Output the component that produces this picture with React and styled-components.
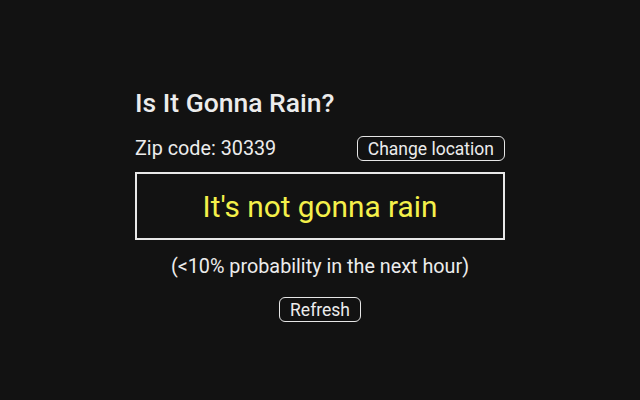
import React from 'react';
import styled, { createGlobalStyle } from 'styled-components';

const GlobalStyle = createGlobalStyle`
  html, body {
    margin: 0;
    padding: 0;
    background: #121212;
  }
  body {
    font-family: Roboto, "Noto Sans", sans-serif;
    color: #ececec;
  }
`;

const Page = styled.div`
  width: 640px;
  height: 400px;
  display: flex;
  justify-content: center;
  padding-top: 83px;
  box-sizing: border-box;
`;

const Card = styled.div`
  width: 370px;
  display: flex;
  flex-direction: column;
`;

const Title = styled.h1`
  margin: 0;
  font-size: 26.5px;
  font-weight: 500;
  line-height: 40px;
`;

const ZipRow = styled.div`
  display: flex;
  justify-content: space-between;
  align-items: center;
  margin-top: 13px;
`;

const ZipText = styled.span`
  font-size: 19.8px;
  line-height: 24px;
`;

const Button = styled.button`
  font-family: Roboto, "Noto Sans", sans-serif;
  font-size: 17.5px;
  color: #ececec;
  background: transparent;
  border: 1.5px solid #e6e6e6;
  border-radius: 6px;
  padding: 2px 10px 1px;
  line-height: 20px;
  cursor: pointer;
`;

const ResultBox = styled.div`
  margin-top: 11px;
  height: 68px;
  box-sizing: border-box;
  border: 2px solid #e8e8e8;
  display: flex;
  align-items: center;
  justify-content: center;
  color: #f4f04a;
  font-size: 29.8px;
`;

const Detail = styled.p`
  margin: 15px 0 0;
  text-align: center;
  font-size: 19.8px;
  line-height: 24px;
`;

const Actions = styled.div`
  display: flex;
  justify-content: center;
  margin-top: 18px;
`;

const App = () => {
  return (
    <>
      <GlobalStyle />
      <Page>
        <Card>
          <Title>Is It Gonna Rain?</Title>
          <ZipRow>
            <ZipText>Zip code: 30339</ZipText>
            <Button>Change location</Button>
          </ZipRow>
          <ResultBox>It's not gonna rain</ResultBox>
          <Detail>(&lt;10% probability in the next hour)</Detail>
          <Actions>
            <Button>Refresh</Button>
          </Actions>
        </Card>
      </Page>
    </>
  );
};

export default App;
